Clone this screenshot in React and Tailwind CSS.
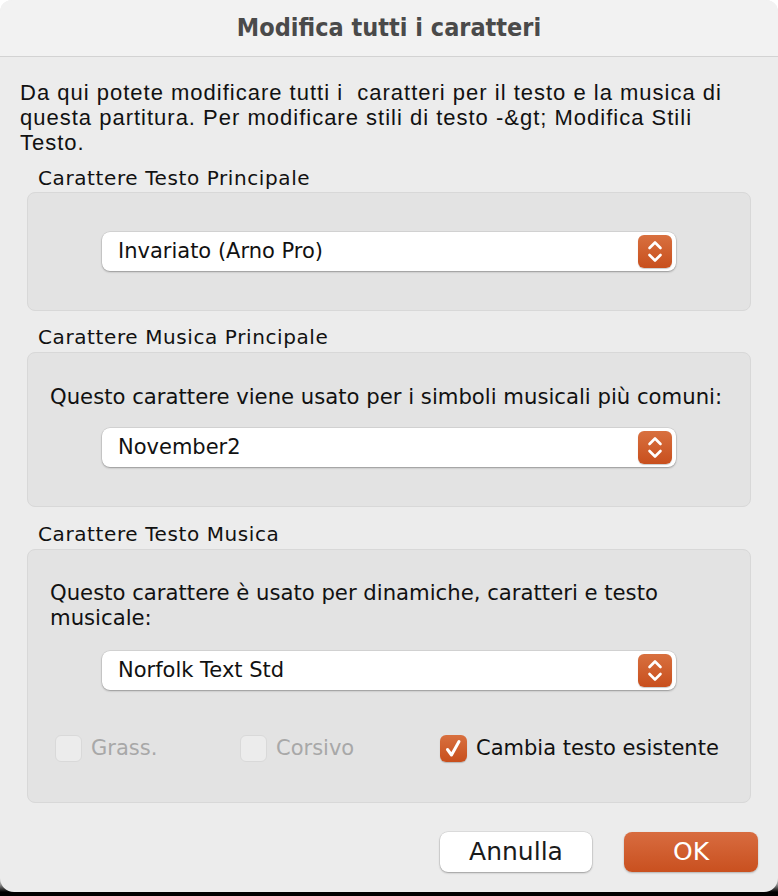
import React from "react";

const lucida = { fontFamily: '"DejaVu Sans", "Lucida Grande", sans-serif' };

const Stepper = () => (
  <div className="flex h-[33px] w-[34px] items-center justify-center rounded-[6px] bg-[linear-gradient(to_bottom,#d8703f,#c84f1d)] shadow-[0_1px_1px_rgba(0,0,0,0.2)]">
    <svg width="34" height="33" viewBox="0 0 34 33" fill="none">
      <path d="M11.5 13 L17 7.5 L22.5 13" stroke="white" strokeWidth="2.6" strokeLinecap="round" strokeLinejoin="round" />
      <path d="M11.5 20 L17 25.5 L22.5 20" stroke="white" strokeWidth="2.6" strokeLinecap="round" strokeLinejoin="round" />
    </svg>
  </div>
);

const PopUp = ({ value }) => (
  <div className="mx-auto flex h-[39px] w-[574px] items-center justify-between rounded-[8px] bg-white pl-[16px] pr-[4px] shadow-[0_0_0_0.5px_rgba(0,0,0,0.12),0_1px_2px_rgba(0,0,0,0.3)]">
    <span className="text-[21px] text-[#111]" style={lucida}>
      {value}
    </span>
    <Stepper />
  </div>
);

const Check = ({ label, checked, disabled, width }) => (
  <label className={`flex items-center gap-[9px] ${width}`}>
    {checked ? (
      <span className="flex h-[27px] w-[27px] items-center justify-center rounded-[6px] bg-[linear-gradient(to_bottom,#d8703f,#c84f1d)] shadow-[0_1px_1px_rgba(0,0,0,0.2)]">
        <svg width="27" height="27" viewBox="0 0 27 27" fill="none">
          <path d="M7.5 14.5 L11.5 20 L19 6.5" stroke="white" strokeWidth="3" strokeLinecap="round" strokeLinejoin="round" />
        </svg>
      </span>
    ) : (
      <span className="h-[27px] w-[27px] rounded-[6px] border border-[#d9d9d9] bg-[#ececec]" />
    )}
    <span
      className={`text-[21px] ${disabled ? "text-[#a8a8a8]" : "text-[#111]"}`}
      style={lucida}
    >
      {label}
    </span>
  </label>
);

const GroupLabel = ({ children, className = "" }) => (
  <div className={`pl-[38px] text-[20px] leading-[24px] tracking-[0.6px] text-[#111] ${className}`} style={lucida}>
    {children}
  </div>
);

export default function App() {
  return (
    <div className="h-[896px] w-[778px] overflow-hidden bg-[linear-gradient(to_bottom,#ffffff_0,#ffffff_860px,#9a9a9a_884px,#000_892px)]">
      <div className="flex h-[892px] flex-col rounded-[12px] rounded-b-[14px] bg-[#ececec]">
        <div className="flex h-[57px] items-center justify-center rounded-t-[12px] border-b border-[#d3d3d3] bg-[#f2f2f2]">
          <h1
            className="text-[25px] font-bold text-[#4a4a4a]"
            style={{ fontFamily: '"DejaVu Sans Condensed", "DejaVu Sans", sans-serif', fontStretch: "condensed" }}
          >
            Modifica tutti i caratteri
          </h1>
        </div>

        <p
          className="mt-[23px] whitespace-pre px-[20px] text-[22px] leading-[25px] tracking-[1px] text-[#111]"
          style={{ fontFamily: '"Liberation Sans", Arial, sans-serif' }}
        >
          {"Da qui potete modificare tutti i  caratteri per il testo e la musica di"}
          <br />
          {"questa partitura. Per modificare stili di testo -&gt; Modifica Stili"}
          <br />
          {"Testo."}
        </p>

        <GroupLabel className="mt-[11px]">Carattere Testo Principale</GroupLabel>
        <div className="mx-[27px] mt-[2px] rounded-[8px] border border-[#d8d8d8] bg-[#e3e3e3] py-[39px]">
          <PopUp value="Invariato (Arno Pro)" />
        </div>

        <GroupLabel className="mt-[14px]">Carattere Musica Principale</GroupLabel>
        <div className="mx-[27px] mt-[3px] rounded-[8px] border border-[#d8d8d8] bg-[#e3e3e3] pb-[39px] pt-[31px]">
          <p className="pl-[22px] text-[21.2px] leading-[25px] text-[#111]" style={lucida}>
            Questo carattere viene usato per i simboli musicali più comuni:
          </p>
          <div className="mt-[19px]">
            <PopUp value="November2" />
          </div>
        </div>

        <GroupLabel className="mt-[15px]">Carattere Testo Musica</GroupLabel>
        <div className="mx-[27px] mt-[3px] rounded-[8px] border border-[#d8d8d8] bg-[#e3e3e3] pb-[37px] pt-[30px]">
          <p className="pl-[22px] pr-[20px] text-[21.2px] leading-[25px] text-[#111]" style={lucida}>
            Questo carattere è usato per dinamiche, caratteri e testo
            <br />
            musicale:
          </p>
          <div className="mt-[21px]">
            <PopUp value="Norfolk Text Std" />
          </div>
          <div className="mt-[43px] flex items-center pl-[27px]">
            <Check label="Grass." disabled width="w-[185px]" />
            <Check label="Corsivo" disabled width="w-[200px]" />
            <Check label="Cambia testo esistente" checked />
          </div>
        </div>

        <div className="mt-[29px] flex justify-end gap-[32px] pr-[20px]">
          <button
            type="button"
            className="h-[40px] w-[152px] rounded-[8px] bg-white text-[25px] text-[#1a1a1a] shadow-[0_0_0_0.5px_rgba(0,0,0,0.12),0_1px_2px_rgba(0,0,0,0.3)]"
            style={lucida}
          >
            Annulla
          </button>
          <button
            type="button"
            className="h-[40px] w-[134px] rounded-[8px] bg-[linear-gradient(to_bottom,#d86c40,#c9501f)] text-[25px] text-white shadow-[0_1px_2px_rgba(0,0,0,0.25)]"
            style={lucida}
          >
            OK
          </button>
        </div>
      </div>
    </div>
  );
}
